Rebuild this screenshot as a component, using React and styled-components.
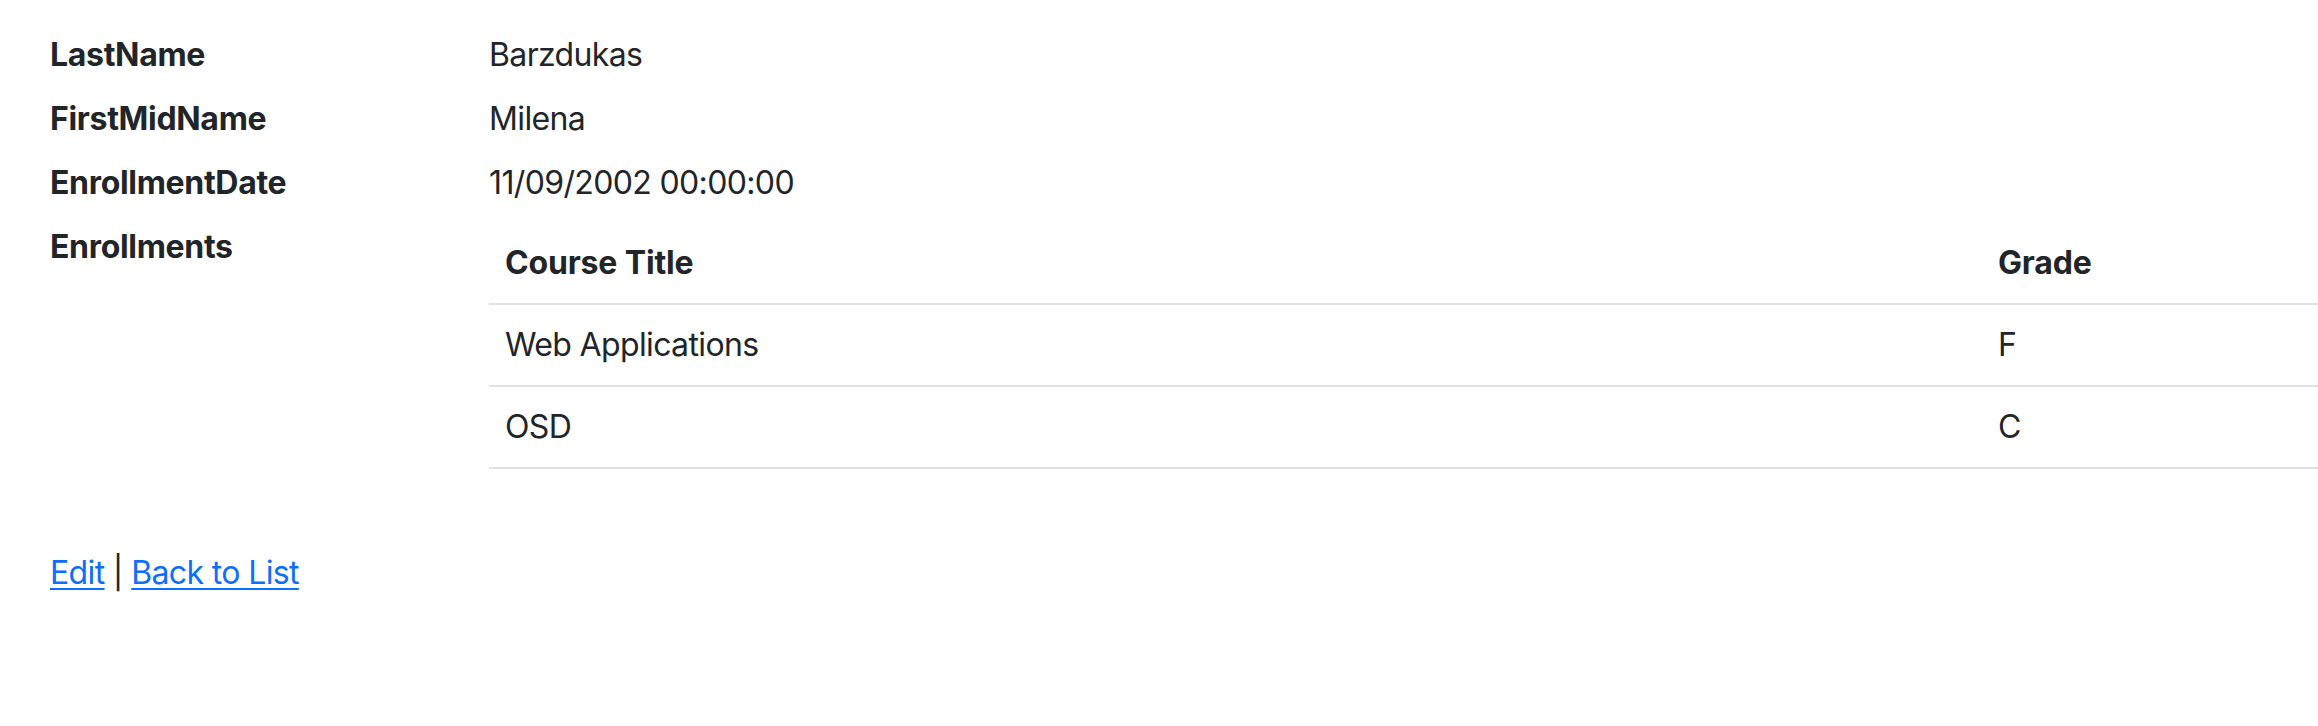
import React from "react";
import styled, { createGlobalStyle } from "styled-components";

const Global = createGlobalStyle`
  html, body { margin: 0; padding: 0; background: #fff; }
  body {
    font-family: Inter, "Noto Sans", "Liberation Sans", sans-serif;
    font-size: 32px;
    line-height: 48px;
    color: #212529;
    overflow: hidden;
  }
`;

const Page = styled.main`
  padding: 31px 0 0 50px;
  width: 2318px;
  box-sizing: border-box;
`;

const DetailList = styled.dl`
  display: grid;
  grid-template-columns: 439px 1fr;
  margin: 0 0 32px 0;
`;

const Term = styled.dt`
  font-weight: 700;
  margin: 0 0 16px 0;
  letter-spacing: -0.01em;
`;

const Value = styled.dd`
  margin: 0 0 16px 0;
  letter-spacing: -0.02em;
`;

const Table = styled.table`
  width: 100%;
  border-collapse: collapse;
  margin-bottom: 32px;
  table-layout: fixed;
`;

const HeadCell = styled.th`
  box-sizing: border-box;
  text-align: left;
  font-weight: 700;
  padding: 16px;
  border-bottom: 2px solid #dee2e6;
  width: ${(p) => p.$w || "auto"};
  letter-spacing: -0.005em;
`;

const Cell = styled.td`
  box-sizing: border-box;
  padding: 16px;
  border-bottom: 2px solid #dee2e6;
  letter-spacing: -0.02em;
`;

const Actions = styled.div`
  letter-spacing: -0.02em;
`;

const Link = styled.a`
  color: #0d6efd;
  text-decoration: underline;
  text-underline-offset: 4px;
  text-decoration-thickness: 2px;
`;

const enrollments = [
  { title: "Web Applications", grade: "F" },
  { title: "OSD", grade: "C" },
];

export default function App() {
  return (
    <>
      <Global />
      <Page>
        <DetailList>
          <Term>LastName</Term>
          <Value>Barzdukas</Value>
          <Term>FirstMidName</Term>
          <Value>Milena</Value>
          <Term>EnrollmentDate</Term>
          <Value>11/09/2002 00:00:00</Value>
          <Term>Enrollments</Term>
          <Value>
            <Table>
              <thead>
                <tr>
                  <HeadCell $w="1493px">Course Title</HeadCell>
                  <HeadCell>Grade</HeadCell>
                </tr>
              </thead>
              <tbody>
                {enrollments.map((e) => (
                  <tr key={e.title}>
                    <Cell>{e.title}</Cell>
                    <Cell>{e.grade}</Cell>
                  </tr>
                ))}
              </tbody>
            </Table>
          </Value>
        </DetailList>
        <Actions>
          <Link href="#">Edit</Link> | <Link href="#">Back to List</Link>
        </Actions>
      </Page>
    </>
  );
}
